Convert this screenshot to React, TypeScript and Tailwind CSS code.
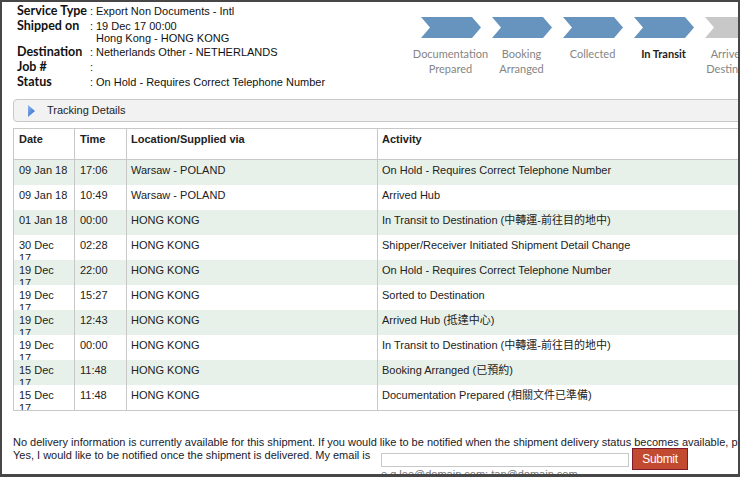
import React from "react";

const rows: [string, string, string, string][] = [
  ["09 Jan 18", "17:06", "Warsaw - POLAND", "On Hold - Requires Correct Telephone Number"],
  ["09 Jan 18", "10:49", "Warsaw - POLAND", "Arrived Hub"],
  ["01 Jan 18", "00:00", "HONG KONG", "In Transit to Destination (中轉運-前往目的地中)"],
  ["30 Dec 17", "02:28", "HONG KONG", "Shipper/Receiver Initiated Shipment Detail Change"],
  ["19 Dec 17", "22:00", "HONG KONG", "On Hold - Requires Correct Telephone Number"],
  ["19 Dec 17", "15:27", "HONG KONG", "Sorted to Destination"],
  ["19 Dec 17", "12:43", "HONG KONG", "Arrived Hub (抵達中心)"],
  ["19 Dec 17", "00:00", "HONG KONG", "In Transit to Destination (中轉運-前往目的地中)"],
  ["15 Dec 17", "11:48", "HONG KONG", "Booking Arranged (已預約)"],
  ["15 Dec 17", "11:48", "HONG KONG", "Documentation Prepared (相關文件已準備)"],
];

const steps: { lines: string[]; done: boolean; current?: boolean }[] = [
  { lines: ["Documentation", "Prepared"], done: true },
  { lines: ["Booking", "Arranged"], done: true },
  { lines: ["Collected"], done: true },
  { lines: ["In Transit"], done: true, current: true },
  { lines: ["Arrived at", "Destination"], done: false },
];

function Chevron({ color }: { color: string }) {
  return (
    <svg width="60" height="21" viewBox="0 0 60 21" className="block">
      <polygon points="0,0 51,0 60,10.5 51,21 0,21 9,10.5" fill={color} />
    </svg>
  );
}

function InfoRow({
  label,
  h,
  children,
}: {
  label: string;
  h: string;
  children: React.ReactNode;
}) {
  return (
    <div className={`flex items-baseline ${h}`}>
      <div className="w-[73px] shrink-0 whitespace-nowrap font-['Lato',sans-serif] font-bold text-[12.5px] leading-[15px] text-[#111]">
        {label}
      </div>
      <div className="w-[6px] shrink-0 text-[11px] leading-[12px] text-[#222]">:</div>
      <div className="text-[11px] leading-[12px] text-[#111] whitespace-nowrap">{children}</div>
    </div>
  );
}

export default function App() {
  return (
    <div className="w-[740px] h-[477px] overflow-hidden bg-white border-l-2 border-t-2 border-r-2 border-b-[3px] border-[#474747] font-['Liberation_Sans',Arial,sans-serif]">
      <div className="w-[736px] h-full overflow-hidden">
        {/* Header */}
        <div className="flex h-[97px]">
          <div className="ml-[15px] pt-[1px] w-[398px] shrink-0">
            <InfoRow label="Service Type" h="h-[15px]">
              Export Non Documents - Intl
            </InfoRow>
            <InfoRow label="Shipped on" h="h-[26px]">
              <div>19 Dec 17 00:00</div>
              <div>Hong Kong - HONG KONG</div>
            </InfoRow>
            <InfoRow label="Destination" h="h-[15px]">
              Netherlands Other - NETHERLANDS
            </InfoRow>
            <InfoRow label="Job #" h="h-[15px]">
              {""}
            </InfoRow>
            <InfoRow label="Status" h="h-[15px]">
              On Hold - Requires Correct Telephone Number
            </InfoRow>
          </div>
          <div className="flex pt-[15px] shrink-0">
            {steps.map((s, i) => (
              <div key={i} className="w-[71px] shrink-0 flex flex-col items-center">
                <Chevron color={s.done ? "#6694be" : "#c8c8c8"} />
                <div
                  className={`mt-[8px] flex flex-col items-center font-['Lato',sans-serif] text-[11px] leading-[15px] ${
                    s.current ? "font-bold text-[#222]" : "text-[#858585]"
                  }`}
                >
                  {s.lines.map((l, j) => (
                    <div key={j} className="whitespace-nowrap">
                      {l}
                    </div>
                  ))}
                </div>
              </div>
            ))}
          </div>
        </div>

        {/* Tracking details bar */}
        <div className="ml-[11px] w-[760px] h-[23px] border border-[#c8c8c8] rounded-l-[4px] bg-[#f2f2f2] flex items-center">
          <svg width="7" height="12" viewBox="0 0 7 12" className="ml-[14px] shrink-0">
            <defs>
              <linearGradient id="tri" x1="0" y1="0" x2="1" y2="1">
                <stop offset="0" stopColor="#8cb6ef" />
                <stop offset="1" stopColor="#2a68c8" />
              </linearGradient>
            </defs>
            <polygon points="0,0 7,6 0,12" fill="url(#tri)" />
          </svg>
          <span className="ml-[12px] text-[11px] leading-[13px] text-[#222]">Tracking Details</span>
        </div>

        {/* Table */}
        <div className="ml-[11px] mt-[6px] w-[760px] border-l border-t border-b border-[#c8c8c8] text-[11px] leading-[13px] text-[#222]">
          <div className="flex h-[31px] border-b border-[#c8c8c8] font-bold">
            <div className="w-[61px] shrink-0 border-r border-[#c8c8c8] pl-[5px] pt-[4px]">Date</div>
            <div className="w-[52px] shrink-0 border-r border-[#c8c8c8] pl-[5px] pt-[4px]">Time</div>
            <div className="w-[251px] shrink-0 border-r border-[#c8c8c8] pl-[4px] pt-[4px]">Location/Supplied via</div>
            <div className="flex-1 pl-[4px] pt-[4px]">Activity</div>
          </div>
          {rows.map((r, i) => (
            <div
              key={i}
              className={`flex h-[25px] overflow-hidden ${i % 2 === 0 ? "bg-[#e8f1e9]" : "bg-white"}`}
            >
              <div className="w-[61px] shrink-0 border-r border-[#c8c8c8] pl-[5px] pt-[4px] overflow-hidden">
                <div className="w-[49px]">{r[0]}</div>
              </div>
              <div className="w-[52px] shrink-0 border-r border-[#c8c8c8] pl-[5px] pt-[4px]">{r[1]}</div>
              <div className="w-[251px] shrink-0 border-r border-[#c8c8c8] pl-[4px] pt-[4px]">{r[2]}</div>
              <div className="flex-1 pl-[4px] pt-[4px] whitespace-nowrap font-['Liberation_Sans','Noto_Sans_CJK_TC',sans-serif]">
                {r[3]}
              </div>
            </div>
          ))}
        </div>

        {/* Bottom notification */}
        <div className="ml-[11px] mt-[26px] h-[10px] whitespace-nowrap text-[11px] leading-[10px] text-[#1a1a2a]">
          No delivery information is currently available for this shipment. If you would like to be notified when the shipment delivery status becomes available, please enter your email below.
        </div>
        <div className="ml-[11px] mt-[1px] flex items-start text-[11px] text-[#1a1a2a]">
          <div className="w-[368px] shrink-0 whitespace-nowrap leading-[10px] pt-[2px]">
            Yes, I would like to be notified once the shipment is delivered. My email is
          </div>
          <div className="flex flex-col shrink-0">
            <input
              type="text"
              className="mt-[5px] w-[248px] h-[14px] border border-[#c8c8c8] bg-white outline-none"
            />
            <div className="mt-[1px] leading-[13px] text-[#777] whitespace-nowrap">e.g lee@domain.com; tan@domain.com</div>
          </div>
          <button className="ml-[3px] w-[56px] h-[22px] shrink-0 bg-[#c24a30] border border-[#7d1c2c] text-white text-[12px] tracking-[-0.3px] font-['Liberation_Sans',Arial,sans-serif]">
            Submit
          </button>
        </div>
      </div>
    </div>
  );
}
